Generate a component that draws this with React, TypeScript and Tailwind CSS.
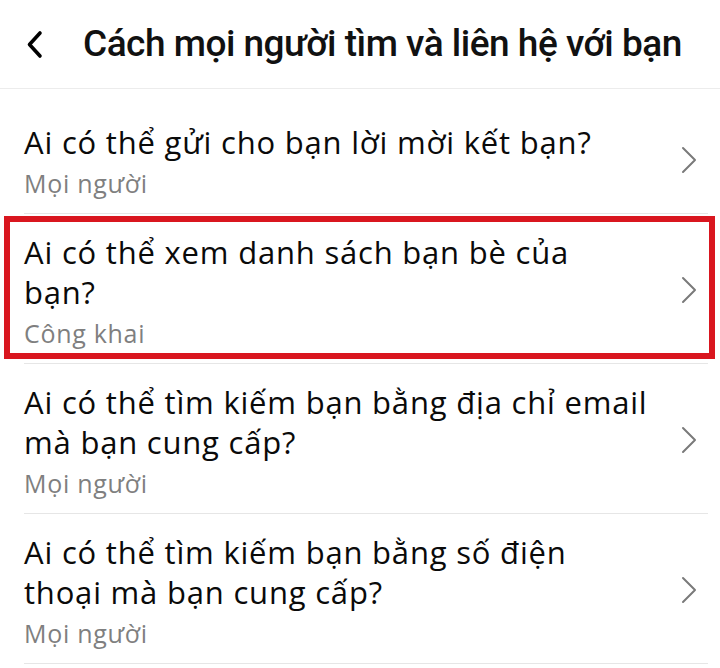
const rows = [
  { lines: ['Ai có thể gửi cho bạn lời mời kết bạn?'], value: 'Mọi người', marked: false },
  { lines: ['Ai có thể xem danh sách bạn bè của', 'bạn?'], value: 'Công khai', marked: true },
  { lines: ['Ai có thể tìm kiếm bạn bằng địa chỉ email', 'mà bạn cung cấp?'], value: 'Mọi người', marked: false },
  { lines: ['Ai có thể tìm kiếm bạn bằng số điện', 'thoại mà bạn cung cấp?'], value: 'Mọi người', marked: false }
]

const Chevron = ({ className }: { className?: string }) => (
  <svg className={className} viewBox="0 0 16 28" fill="none" stroke="currentColor" strokeLinecap="round" strokeLinejoin="round">
    <path d="M2 2l12 12L2 26" strokeWidth="2" />
  </svg>
)

const BackIcon = () => (
  <svg className="w-[18px] h-[29px] text-black" viewBox="0 0 18 29" fill="none" stroke="currentColor" strokeLinecap="round" strokeLinejoin="round">
    <path d="M14 3L3.5 14.5 14 26" strokeWidth="3.6" />
  </svg>
)

export default function App() {
  return (
    <div className="w-[720px] h-[668px] overflow-hidden bg-white" style={{ fontFamily: '"Open Sans", "Liberation Sans", sans-serif' }}>
      {/* Header */}
      <div className="h-[89px] flex items-center border-b border-[#ececec]">
        <div className="pl-[26px] w-[83px] flex items-center">
          <BackIcon />
        </div>
        <h1 className="text-[37px] leading-[40px] font-medium text-[#111] tracking-[-0.5px] whitespace-nowrap" style={{ fontFamily: 'Roboto, "Liberation Sans", sans-serif' }}>
          Cách mọi người tìm và liên hệ với bạn
        </h1>
      </div>

      {/* Settings list */}
      <div className="pt-[15px]">
        {rows.map((row) => (
          <div key={row.value + row.lines[0]} className="relative">
            <div className="flex items-center pl-[24px] pr-[23px] pt-[18px] pb-[15px]">
              <div className="flex-1">
                {row.lines.map((line) => (
                  <div key={line} className="text-[31px] leading-[40px] tracking-[0.8px] text-[#0a0a0a] whitespace-nowrap">{line}</div>
                ))}
                <div className="mt-[6px] text-[25px] leading-[30px] tracking-[0.7px] text-[#7f7f7f]">{row.value}</div>
              </div>
              <Chevron className="w-[16px] h-[28px] text-[#7a7a7a]" />
            </div>
            <div className="ml-[24px] mr-[12px] h-px bg-[#e6e6e6]" />
            {row.marked && (
              <div className="absolute left-[4px] right-[5px] top-[2px] bottom-[5px] border-[6px] border-[#d9161f]" />
            )}
          </div>
        ))}
      </div>
    </div>
  )
}
